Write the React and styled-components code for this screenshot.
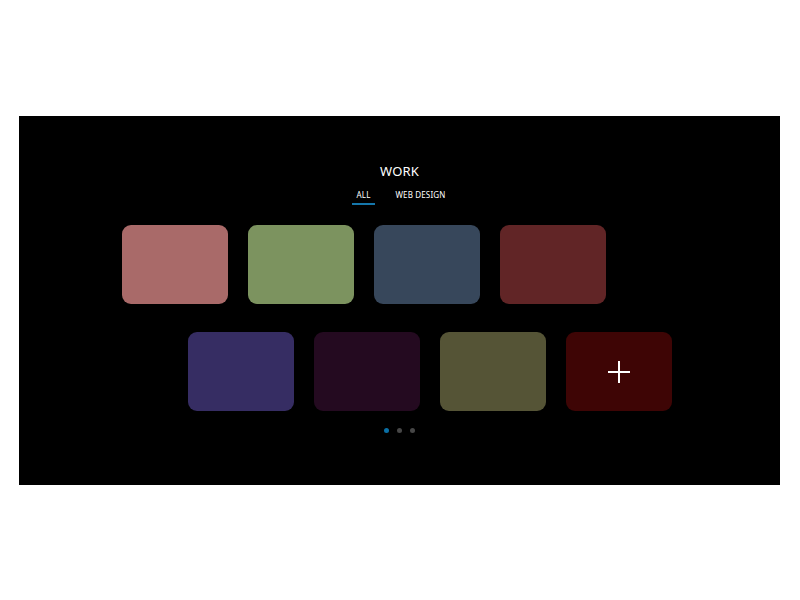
import React from 'react';
import styled, {createGlobalStyle} from 'styled-components';

const GlobalStyle = createGlobalStyle`
    body{
        margin:0;
        background:#fff;
        font-family: "Noto Sans", "Liberation Sans", sans-serif;
    }
`

const rows = [
    {offset: 103, cards: ['#a96a69', '#7c935f', '#37475b', '#612526']},
    {offset: 169, cards: ['#362d63', '#240a20', '#555436', '#3e0505']},
];

const Work = () => {
    return (
        <Section>
            <Title>WORK</Title>
            <Tabs>
                <Tab active>ALL</Tab>
                <Tab>WEB DESIGN</Tab>
            </Tabs>
            <Grid>
                {rows.map((row, i) => (
                    <Row key={i} offset={row.offset}>
                        {row.cards.map((c, j) => (
                            <Card key={j} color={c}>
                                {i === 1 && j === 3 && (
                                    <svg width="24" height="24" viewBox="0 0 24 24">
                                        <path d="M12 1v22M1 12h22" stroke="#fff" strokeWidth="2" />
                                    </svg>
                                )}
                            </Card>
                        ))}
                    </Row>
                ))}
            </Grid>
            <Dots>
                <Dot active />
                <Dot />
                <Dot />
            </Dots>
        </Section>
    )
}

export default function App() {
    return (
        <>
            <GlobalStyle />
            <Work />
        </>
    )
}

const Section = styled.section`
    margin:116px 20px 0 19px;
    height:369px;
    background:#000;
    padding-top:47px;
    box-sizing:border-box;
    display:flex;
    flex-direction:column;
    align-items:center;
`
const Title = styled.h2`
    margin:0;
    color:#fff;
    font-size:13px;
    font-weight:400;
    line-height:16px;
    letter-spacing:0.2px;
`
const Tabs = styled.div`
    display:flex;
    gap:15px;
    margin-top:11px;
    margin-left:3px;
`
const Tab = styled.div`
    color:#fff;
    font-size:8px;
    line-height:10px;
    letter-spacing:0.15px;
    padding:0 5px 3px;
    border-bottom:2px solid ${p => p.active ? '#1577ab' : 'transparent'};
`
const Grid = styled.div`
    align-self:stretch;
    display:flex;
    flex-direction:column;
    gap:28px;
    margin-top:20px;
`
const Row = styled.div`
    display:flex;
    gap:20px;
    padding-left:${p => p.offset}px;
`
const Card = styled.div`
    width:106px;
    height:79px;
    border-radius:9px;
    background:${p => p.color};
    display:flex;
    align-items:center;
    justify-content:center;
`
const Dots = styled.div`
    display:flex;
    gap:8px;
    margin-top:17px;
`
const Dot = styled.span`
    width:5px;
    height:5px;
    border-radius:50%;
    background:${p => p.active ? '#0a6fa5' : '#474747'};
`
